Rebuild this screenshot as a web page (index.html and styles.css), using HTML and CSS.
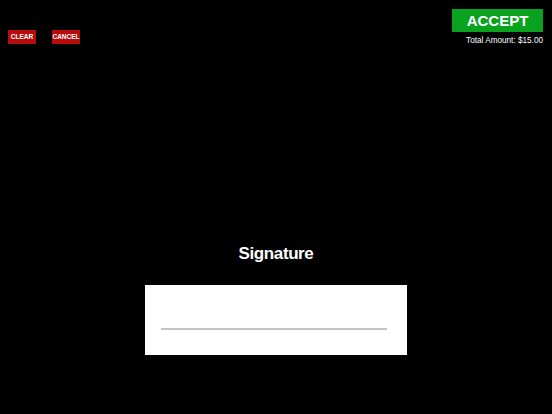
FILE: index.html
```html
<!DOCTYPE html>
<html>
<head>
<meta charset="utf-8">
<link rel="stylesheet" href="styles.css">
</head>
<body>
<div class="screen">
  <header class="topbar">
    <div class="actions">
      <button class="btn-small">CLEAR</button>
      <button class="btn-small">CANCEL</button>
    </div>
    <div class="summary">
      <button class="btn-accept">ACCEPT</button>
      <div class="total">Total Amount: $15.00</div>
    </div>
  </header>
  <main class="sign-area">
    <h1 class="sign-title">Signature</h1>
    <div class="sign-pad">
      <div class="sign-line"></div>
    </div>
  </main>
</div>
</body>
</html>
```
FILE: styles.css
```css
html, body {
  margin: 0;
  padding: 0;
  background: #000;
  font-family: "Liberation Sans", Arial, sans-serif;
}

.screen {
  width: 552px;
  height: 414px;
  display: flex;
  flex-direction: column;
}

.topbar {
  display: flex;
  justify-content: space-between;
  align-items: flex-start;
  padding: 9px 9px 0 8px;
}

.actions {
  display: flex;
  gap: 16px;
  margin-top: 21px;
}

.btn-small {
  width: 28px;
  height: 14px;
  padding: 0;
  border: 0;
  background: #b80c0c;
  color: #fff;
  font-family: "Liberation Sans", Arial, sans-serif;
  font-weight: bold;
  font-size: 6.5px;
  line-height: 14px;
}

.summary {
  display: flex;
  flex-direction: column;
  align-items: flex-end;
}

.btn-accept {
  width: 91px;
  height: 23px;
  padding: 0;
  border: 0;
  background: #08a21f;
  color: #fff;
  font-family: "Liberation Sans", Arial, sans-serif;
  font-weight: bold;
  font-size: 15px;
  line-height: 23px;
}

.total {
  color: #fff;
  font-size: 8.2px;
  margin-top: 4px;
}

.sign-area {
  display: flex;
  flex-direction: column;
  align-items: center;
  margin-top: 199px;
}

.sign-title {
  margin: 0;
  color: #fff;
  font-size: 17px;
  letter-spacing: -0.4px;
  font-weight: bold;
  line-height: 20px;
}

.sign-pad {
  margin-top: 21px;
  width: 262px;
  height: 70px;
  background: #fff;
  box-sizing: border-box;
  padding: 43px 20px 0 16px;
}

.sign-line {
  height: 2px;
  background: #c4c4c4;
}
```
